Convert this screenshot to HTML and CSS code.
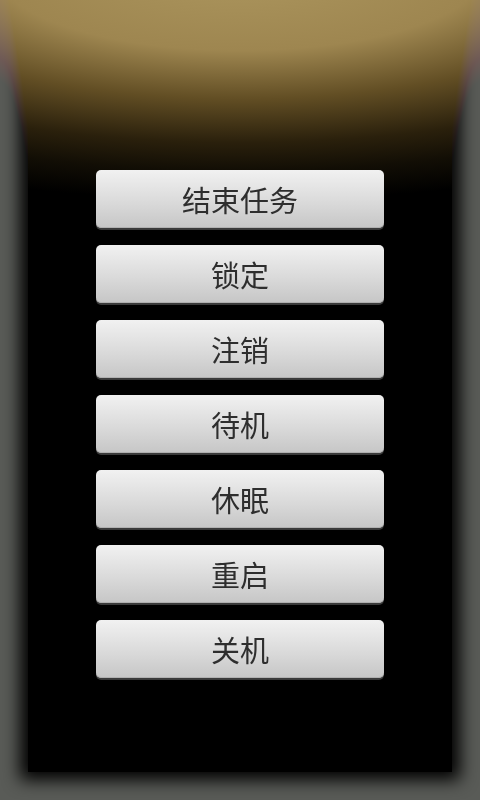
FILE: index.html
```html
<!DOCTYPE html>
<html lang="zh-CN">
<head>
  <meta charset="UTF-8">
  <title>关机菜单</title>
  <link rel="stylesheet" href="styles.css">
</head>
<body>
<div id="screen">
  <div class="frame">
    <div class="menu">
      <button class="menu-btn">结束任务</button>
      <button class="menu-btn">锁定</button>
      <button class="menu-btn">注销</button>
      <button class="menu-btn">待机</button>
      <button class="menu-btn">休眠</button>
      <button class="menu-btn">重启</button>
      <button class="menu-btn">关机</button>
    </div>
  </div>
  <div class="glow"></div>
</div>
</body>
</html>
```

FILE: styles.css
```css
/* 全体 */
html, body {
  margin: 0;
  padding: 0;
  width: 100%;
  height: 100%;
  background: #595b57;
  font-family: "Noto Sans CJK SC", "Noto Sans", sans-serif;
  overflow: hidden;
}

#screen {
  position: relative;
  width: 480px;
  height: 800px;
  overflow: hidden;
}

/* 黒いパネル（ぼかした縁） */
.frame {
  margin: 0 28px;
  height: 772px;
  background: #000;
  box-shadow: 0 0 16px 8px #000;
}

/* 上部の金色の光 */
.glow {
  position: absolute;
  top: 0;
  left: 0;
  width: 100%;
  height: 240px;
  pointer-events: none;
  mix-blend-mode: lighten;
  background: radial-gradient(ellipse 700px 230px at 50% -30px,
    rgb(172, 150, 94) 0%,
    rgb(158, 134, 80) 35%,
    rgb(98, 78, 36) 56%,
    rgb(42, 32, 12) 75%,
    rgb(18, 14, 5) 87%,
    rgb(0, 0, 0) 100%);
}

/* ボタン一覧 */
.menu {
  display: flex;
  flex-direction: column;
  align-items: center;
  gap: 17px;
  padding-top: 170px;
}

.menu-btn {
  position: relative;
  z-index: 1;
  width: 288px;
  height: 58px;
  border: none;
  border-radius: 5px;
  background: linear-gradient(#f1f1f1, #d8d8d8 60%, #c6c6c6);
  box-shadow: 0 2px 0 #3a3a3a, inset 0 -1px 0 #b0b0b0;
  font-family: inherit;
  font-size: 29px;
  line-height: 1;
  color: #2e2e2e;
  padding: 0;
  cursor: pointer;
}
```
